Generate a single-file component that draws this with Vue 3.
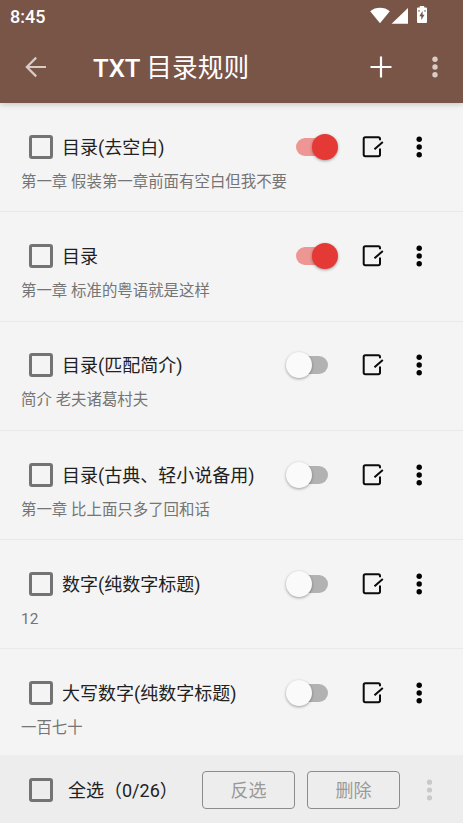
<script setup>
import { ref } from 'vue'

const rules = ref([
  { name: '目录(去空白)', example: '第一章 假装第一章前面有空白但我不要', enabled: true },
  { name: '目录', example: '第一章 标准的粤语就是这样', enabled: true },
  { name: '目录(匹配简介)', example: '简介 老夫诸葛村夫', enabled: false },
  { name: '目录(古典、轻小说备用)', example: '第一章 比上面只多了回和话', enabled: false },
  { name: '数字(纯数字标题)', example: '12', enabled: false },
  { name: '大写数字(纯数字标题)', example: '一百七十', enabled: false },
])
</script>

<template>
  <div class="screen">
    <header class="header">
      <div class="status">
        <span class="clock">8:45</span>
        <svg class="status-icons" width="60" height="20" viewBox="0 0 60 20" fill="#fff">
          <path d="M1.2 5.200C6.500 .7 15.500 .7 20.800 5.200L11 17.300Z" />
          <path d="M39 2V17.700H22.600Z" />
          <path fill-rule="evenodd" d="M50.800 0h4.400v1.500h2q.8 0 .8 1v13.500q0 1-1 1h-8q-1 0-1-1v-13.500q0-1 .8-1h2zM53.600 5l-3.300 5.200h2v3.800l3.200-5.300h-1.900zM49.300 4.200v1.400h1.400v-1.400zM55.300 4.200v1.400h1.400v-1.400z" />
        </svg>
      </div>
      <div class="toolbar">
        <svg class="back" width="22" height="22" viewBox="0 0 22 22" fill="none" stroke="#d7ccc8" stroke-width="2.2">
          <path d="M21 11H2.500M11.200 1.600L1.800 11L11.200 20.400" />
        </svg>
        <h1 class="title">TXT <span class="title-cjk">目录规则</span></h1>
        <svg class="plus" width="22" height="22" viewBox="0 0 22 22" stroke="#fff" stroke-width="2.200">
          <path d="M.5 11h21M11 .5v21" />
        </svg>
        <svg class="dots light" width="8" height="22" viewBox="0 0 8 22">
          <circle cx="4" cy="3.200" r="2.700" /><circle cx="4" cy="11" r="2.700" /><circle cx="4" cy="18.800" r="2.700" />
        </svg>
      </div>
    </header>

    <main class="list">
      <section v-for="rule in rules" :key="rule.name" class="rule">
        <div class="rule-main">
          <span class="checkbox"></span>
          <span class="name">{{ rule.name }}</span>
          <span class="switch" :class="{ on: rule.enabled }"><span class="thumb"></span></span>
          <svg class="edit" width="22" height="22" viewBox="0 0 22 22" fill="none" stroke="#0b0b0b" stroke-width="2">
            <path d="M18 4.200V3Q18 1.300 16.300 1.300H3.300Q1.700 1.300 1.700 3V18.500Q1.700 20.200 3.300 20.200H16.300Q18 20.200 18 18.500V12.500" />
            <path d="M12.500 13.300L20.800 6" />
          </svg>
          <svg class="dots" width="8" height="22" viewBox="0 0 8 22">
            <circle cx="4.200" cy="3.200" r="2.700" /><circle cx="4.200" cy="11" r="2.700" /><circle cx="4.200" cy="18.800" r="2.700" />
          </svg>
        </div>
        <p class="example">{{ rule.example }}</p>
      </section>
    </main>

    <footer class="footer">
      <span class="checkbox"></span>
      <span class="count">全选（0/26）</span>
      <button class="action" disabled>反选</button>
      <button class="action" disabled>删除</button>
      <svg class="dots faded" width="8" height="22" viewBox="0 0 8 22">
        <circle cx="4.500" cy="3.200" r="2.600" /><circle cx="4.500" cy="11" r="2.600" /><circle cx="4.500" cy="18.800" r="2.600" />
      </svg>
    </footer>
  </div>
</template>

<style>
body {
  margin: 0;
  overflow: hidden;
}
</style>

<style scoped>
.screen {
  display: flex;
  flex-direction: column;
  width: 463px;
  height: 823px;
  background: #f4f4f4;
  font-family: Roboto, "Noto Sans CJK SC", sans-serif;
  overflow: hidden;
}
.screen * {
  box-sizing: border-box;
}
svg {
  display: block;
  flex: none;
}
.header {
  flex: none;
  height: 103px;
  background: #795548;
  color: #fff;
  box-shadow: 0 1px 6px rgba(0, 0, 0, 0.22);
  z-index: 1;
}
.status {
  display: flex;
  justify-content: space-between;
  height: 31px;
  padding: 6px 34px 0 10px;
}
.clock {
  font-size: 18px;
  line-height: 21px;
  font-weight: 500;
}
.toolbar {
  display: flex;
  align-items: center;
  height: 72px;
  padding: 0 24.500px 0 25px;
}
.title {
  flex: 1;
  margin: 0 0 0 46px;
  padding-top: 2px;
  font-size: 25.700px;
  line-height: 36px;
  font-weight: 500;
  white-space: nowrap;
}
.title-cjk {
  font-weight: 400;
}
.plus {
  margin-right: 39px;
}
.dots {
  fill: #000;
}
.dots.light {
  fill: #d7ccc8;
}
.dots.faded {
  margin-left: 25px;
  fill: #c9c9c9;
}
.list {
  flex: 1;
  min-height: 0;
  overflow: hidden;
}
.rule {
  height: 109.300px;
  padding-top: 20.700px;
  border-bottom: 1px solid #e9e9e9;
}
.rule-main {
  display: flex;
  align-items: center;
  height: 46px;
  padding: 0 40px 0 29px;
}
.checkbox {
  flex: none;
  width: 24px;
  height: 24px;
  border: 3px solid #737373;
  border-radius: 3px;
}
.name {
  flex: 1;
  margin-left: 9px;
  padding-top: 2px;
  font-size: 18px;
  line-height: 26px;
  color: #212121;
  white-space: nowrap;
}
.switch {
  position: relative;
  display: flex;
  flex: none;
  align-items: center;
  width: 52px;
  height: 26px;
}
.switch::before {
  content: "";
  position: absolute;
  left: 10px;
  top: 4px;
  width: 32px;
  height: 18px;
  border-radius: 9px;
  background: #b2b2b2;
}
.thumb {
  position: relative;
  width: 26px;
  height: 26px;
  border-radius: 50%;
  background: #fafafa;
  box-shadow: 0 1px 3px rgba(0, 0, 0, 0.36);
}
.switch.on {
  justify-content: flex-end;
}
.switch.on::before {
  background: #ed9693;
}
.switch.on .thumb {
  background: #e53935;
}
.edit {
  margin: 0 31px 0 24px;
}
.example {
  margin: 0;
  padding: 1px 0 0 21px;
  font-size: 15.430px;
  line-height: 22px;
  color: #757575;
  white-space: nowrap;
}
.footer {
  display: flex;
  flex: none;
  align-items: center;
  height: 68px;
  padding: 1px 0 0 29px;
  background: #ededed;
}
.count {
  width: 134px;
  margin-left: 15px;
  padding-top: 2px;
  font-size: 18px;
  line-height: 26px;
  color: #212121;
  white-space: nowrap;
}
.action {
  width: 93px;
  height: 38px;
  padding: 2px 0 0;
  border: 1px solid #8c8c8c;
  border-radius: 4px;
  background: transparent;
  color: #9a9a9a;
  font: 18px/26px Roboto, "Noto Sans CJK SC", sans-serif;
}
.action + .action {
  margin-left: 12px;
}
</style>
